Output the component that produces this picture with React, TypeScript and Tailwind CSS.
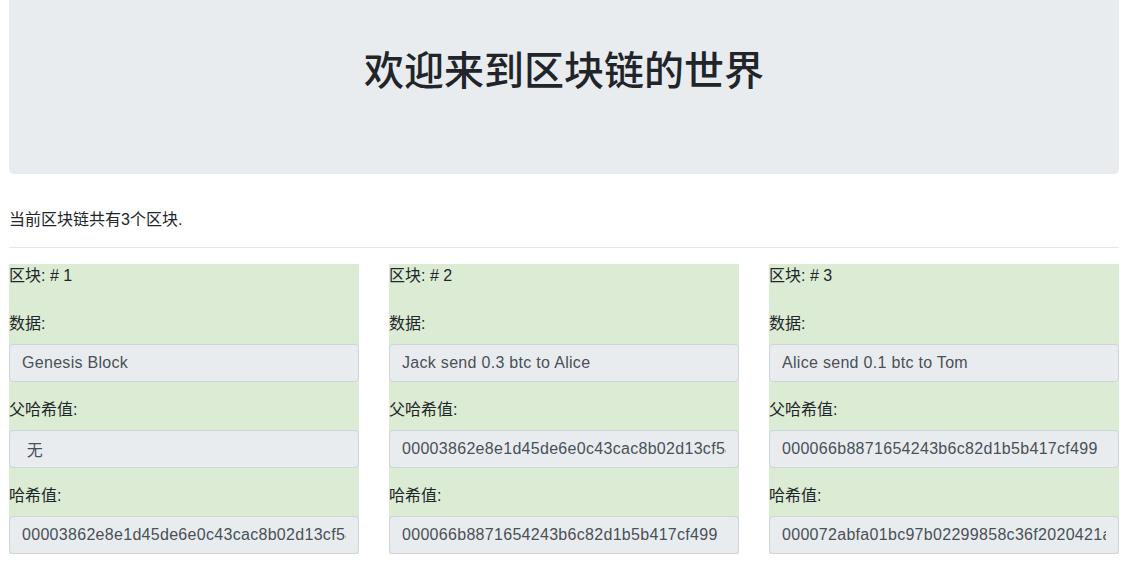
import React from "react";

const font = { fontFamily: '"Liberation Sans", "Noto Sans CJK SC", sans-serif' };

type Block = { idx: number; data: string; prev: string; hash: string };

const blocks: Block[] = [
  {
    idx: 1,
    data: "Genesis Block",
    prev: " 无",
    hash: "00003862e8e1d45de6e0c43cac8b02d13cf5a1b2c3d4e5f6",
  },
  {
    idx: 2,
    data: "Jack send 0.3 btc to Alice",
    prev: "00003862e8e1d45de6e0c43cac8b02d13cf5a1b2c3d4e5f6",
    hash: "000066b8871654243b6c82d1b5b417cf499",
  },
  {
    idx: 3,
    data: "Alice send 0.1 btc to Tom",
    prev: "000066b8871654243b6c82d1b5b417cf499",
    hash: "000072abfa01bc97b02299858c36f2020421a9c8e",
  },
];

function Field({ value }: { value: string }) {
  return (
    <input
      readOnly
      value={value}
      className="block w-full h-[38px] px-3 rounded-[4px] border border-[#ced4da] bg-[#e9ecef] text-[16px] tracking-[0.3px] text-[#495057] outline-none"
      style={font}
    />
  );
}

export default function App() {
  return (
    <div className="w-[1132px] min-h-[575px] bg-white text-[#212529] text-[16px] leading-6" style={font}>
      <div className="mx-[9px] w-[1110px]">
        <div className="h-[174px] bg-[#e9ecef] rounded-b-[5px] pt-[47px]">
          <h1 className="text-center text-[40px] leading-[48px] font-medium text-[#212529]">
            欢迎来到区块链的世界
          </h1>
        </div>
        <p className="mt-[34px] leading-6">当前区块链共有3个区块.</p>
        <hr className="mt-[15px] border-0 border-t border-[#e6e6e6]" />
        <div className="mt-4 grid grid-cols-3 gap-[30px]">
          {blocks.map((b) => (
            <div key={b.idx} className="bg-[#dcecd4]">
              <div className="leading-6">区块: # {b.idx}</div>
              <div className="mt-6 leading-6">数据:</div>
              <div className="mt-2">
                <Field value={b.data} />
              </div>
              <div className="mt-4 leading-6">父哈希值:</div>
              <div className="mt-2">
                <Field value={b.prev} />
              </div>
              <div className="mt-4 leading-6">哈希值:</div>
              <div className="mt-2">
                <Field value={b.hash} />
              </div>
            </div>
          ))}
        </div>
      </div>
    </div>
  );
}
